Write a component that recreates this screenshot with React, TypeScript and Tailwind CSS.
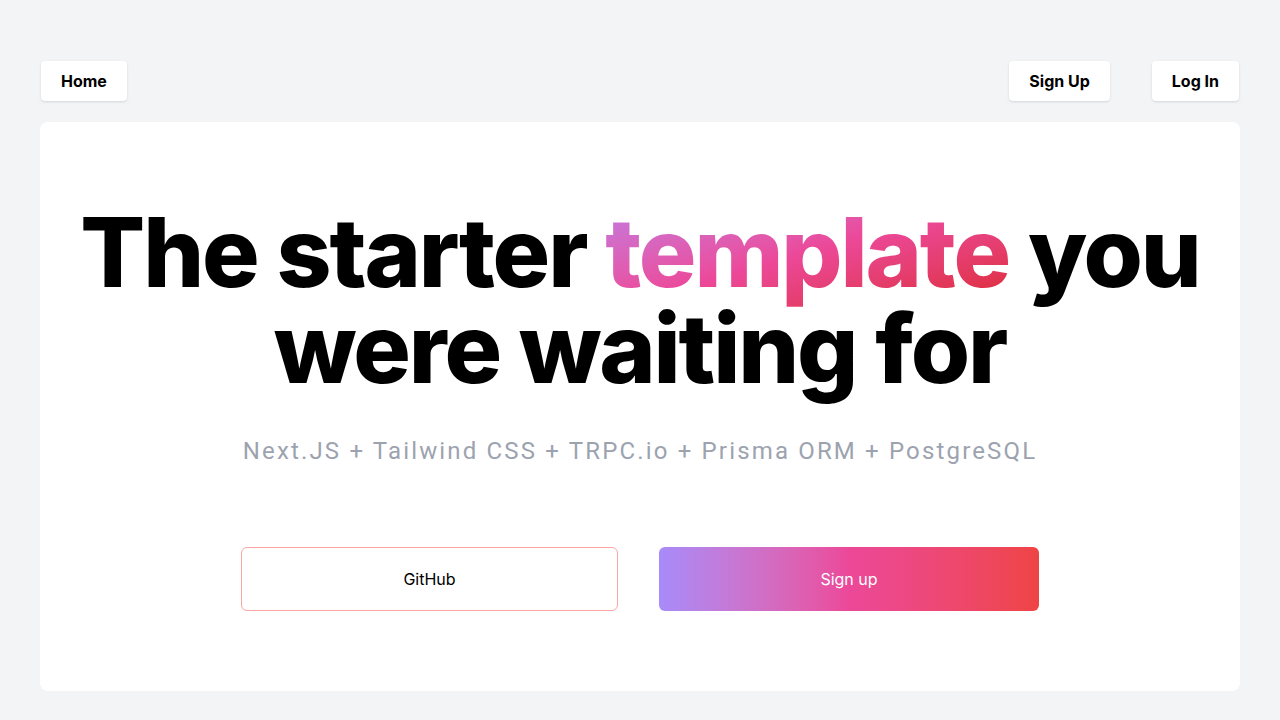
export default function App() {
  return (
    <div className="min-h-screen bg-[#f3f4f6] px-10 pt-[61px] pb-[29px] flex flex-col font-['Inter',sans-serif]">
      <nav className="flex items-center justify-between h-10">
        <a className="ml-px h-10 px-5 flex items-center bg-white rounded shadow-sm font-bold text-base text-black">Home</a>
        <div className="mr-px flex items-center gap-[42px]">
          <a className="h-10 px-5 flex items-center bg-white rounded shadow-sm font-bold text-base text-black">Sign Up</a>
          <a className="h-10 px-5 flex items-center bg-white rounded shadow-sm font-bold text-base text-black">Log In</a>
        </div>
      </nav>

      <main className="mt-[21px] flex-1 bg-white rounded-lg flex flex-col items-center pt-[82px]">
        <h1 className="text-center text-[96px] leading-none font-extrabold tracking-[-0.022em] text-black">
          The starter{" "}
          <span className="bg-gradient-to-br from-[#bd7ce8] via-[#ec4899] to-[#dc2626] bg-clip-text text-transparent">
            template
          </span>{" "}
          you
          <br />
          were waiting for
        </h1>
        <p className="mt-[39px] text-2xl tracking-[0.09em] text-[#9ca3af] font-['Roboto',sans-serif]">
          Next.JS + Tailwind CSS + TRPC.io + Prisma ORM + PostgreSQL
        </p>
        <div className="mt-20 flex gap-[41px]">
          <a className="w-[377px] h-16 flex items-center justify-center rounded-md border border-[#fca5a5] text-base text-black">
            GitHub
          </a>
          <a className="w-[380px] h-16 flex items-center justify-center rounded-md bg-gradient-to-r from-[#a78bfa] via-[#ec4899] to-[#ef4444] text-base text-white">
            Sign up
          </a>
        </div>
      </main>
    </div>
  );
}
